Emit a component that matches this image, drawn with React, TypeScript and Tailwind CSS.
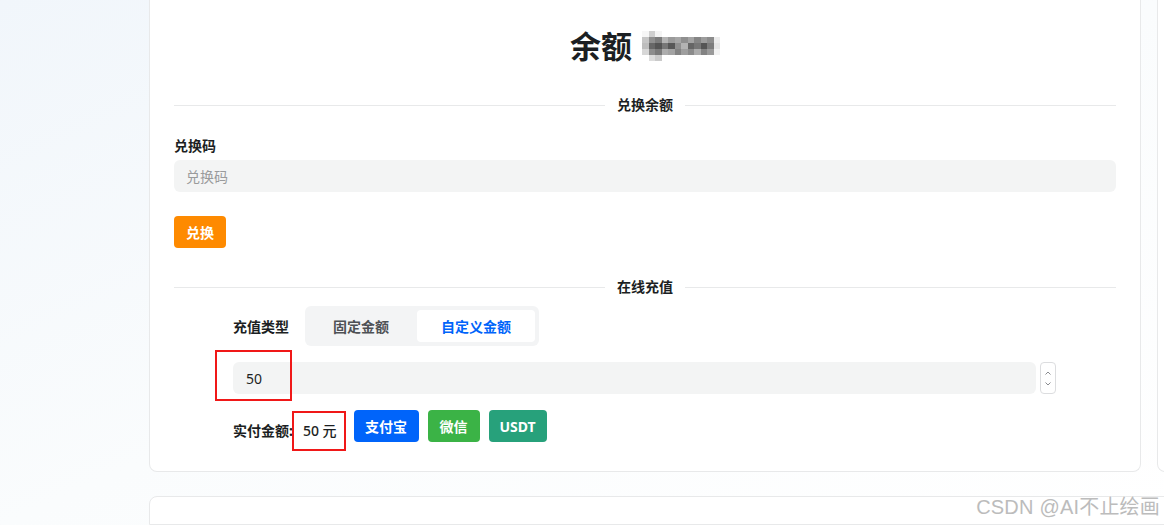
import React from "react";

const mosaic: string[][] = [
  ["#f6f6f6", "#cfcfcf", "#f4f4f4", "#ffffff", "#ffffff", "#ffffff", "#ffffff", "#ffffff", "#ffffff", "#ffffff", "#ffffff", "#ffffff"],
  ["#c6c6c6", "#8f8f8f", "#7c7c7c", "#b4b4b4", "#9a9a9a", "#a6a6a6", "#8f8f8f", "#a3a3a3", "#858585", "#9c9c9c", "#8c8c8c", "#ececec"],
  ["#bdbdbd", "#676767", "#555555", "#777777", "#575757", "#8f8f8f", "#b3b3b3", "#656565", "#767676", "#545454", "#7b7b7b", "#e4e4e4"],
  ["#d7d7d7", "#8d8d8d", "#7a7a7a", "#adadad", "#a3a3a3", "#838383", "#9e9e9e", "#8b8b8b", "#acacac", "#838383", "#9a9a9a", "#f2f2f2"],
  ["#ffffff", "#dcdcdc", "#cacaca", "#ffffff", "#ffffff", "#ffffff", "#ffffff", "#ffffff", "#ffffff", "#ffffff", "#ffffff", "#ffffff"],
];

function Mosaic() {
  const s = 6.5;
  return (
    <svg width={78} height={30} viewBox="0 0 78 32.5" preserveAspectRatio="none" className="block" shapeRendering="crispEdges">
      {mosaic.map((row, r) =>
        row.map((c, i) => <rect key={`${r}-${i}`} x={i * s} y={r * s} width={s + 0.2} height={s + 0.2} fill={c} />)
      )}
    </svg>
  );
}

function Divider({ label }: { label: string }) {
  return (
    <div className="flex items-center h-5">
      <div className="flex-1 h-px bg-[#e8e9ea]" />
      <span className="px-3 text-[14px] font-bold text-[#1c1f23] leading-5">{label}</span>
      <div className="flex-1 h-px bg-[#e8e9ea]" />
    </div>
  );
}

export default function App() {
  return (
    <div
      className="relative h-[525px] w-[1164px] overflow-hidden bg-gradient-to-br from-[#f1f6fb] via-[#fafcfd] to-white flex"
      style={{ fontFamily: '"Noto Sans", "Noto Sans CJK SC", sans-serif' }}
    >
      <div className="w-[149px] flex-none" />
      <div className="flex flex-col flex-none w-[1100px]">
        <div className="flex gap-[16px]">
          <div className="w-[992px] h-[472px] flex-none bg-white border border-t-0 border-[#e8e9ea] rounded-b-lg px-6">
            <div className="pt-[26px] flex items-center justify-center gap-[10px] h-[66px]">
              <span className="text-[31px] leading-[40px] font-bold text-[#1c1f23]">余额</span>
              <Mosaic />
            </div>
            <div className="mt-[29px]">
              <Divider label="兑换余额" />
            </div>
            <div className="mt-[21px] text-[14px] leading-5 font-bold text-[#1c1f23]">兑换码</div>
            <div className="mt-1 h-8 rounded-md bg-[#f3f4f4] flex items-center px-3 text-[14px] text-[#9a9b9c]">兑换码</div>
            <button className="mt-6 h-8 w-[52px] rounded bg-[#fe8a00] text-white text-[14px] font-bold flex items-center justify-center">
              兑换
            </button>
            <div className="mt-[29px]">
              <Divider label="在线充值" />
            </div>
            <div className="w-[824px] ml-[59px] relative">
              <div className="mt-[9px] flex items-center gap-4 h-10">
                <span className="text-[14px] font-bold text-[#1c1f23]">充值类型</span>
                <div className="flex gap-1 p-1 bg-[#f3f4f5] rounded-md">
                  <div className="h-8 px-6 flex items-center text-[14px] font-semibold text-[#4e5155]">固定金额</div>
                  <div className="h-8 px-6 flex items-center text-[14px] font-bold text-[#0064fa] bg-white rounded">自定义金额</div>
                </div>
              </div>
              <div className="mt-4 flex items-center gap-1">
                <div className="h-8 w-[803px] rounded-md bg-[#f3f4f4] flex items-center px-[13px] text-[14px] text-[#1c1f23]">50</div>
                <div className="h-8 w-4 border border-[#dcdddf] rounded flex flex-col items-center justify-center gap-[7px]">
                  <svg width="6" height="4" viewBox="0 0 6 4"><path d="M0.5 3.5 L3 1 L5.5 3.5" fill="none" stroke="#8a8c90" strokeWidth="1" /></svg>
                  <svg width="6" height="4" viewBox="0 0 6 4"><path d="M0.5 0.5 L3 3 L5.5 0.5" fill="none" stroke="#8a8c90" strokeWidth="1" /></svg>
                </div>
              </div>
              <div className="mt-4 flex items-end h-8">
                <span className="text-[14px] font-bold text-[#1c1f23] leading-5 pb-px">实付金额:</span>
                <span className="ml-[10px] text-[14px] font-medium text-[#1c1f23] leading-5 pb-px">50 元</span>
                <div className="ml-[17px] flex gap-[9px] self-start">
                  <button className="h-8 w-[65px] rounded bg-[#0064fa] text-white text-[14px] font-bold">支付宝</button>
                  <button className="h-8 w-[52px] rounded bg-[#3bb346] text-white text-[14px] font-bold">微信</button>
                  <button className="h-8 w-[58px] rounded bg-[#27a17b] text-white text-[14px] font-bold">USDT</button>
                </div>
              </div>
              <div className="absolute left-[-18px] top-[44px] w-[77px] h-[51px] border-2 border-[#f01818]" />
              <div className="absolute left-[59px] top-[105px] w-[54px] h-[40px] border-2 border-[#f01818]" />
            </div>
          </div>
          <div className="w-[400px] h-[472px] flex-none bg-white border border-t-0 border-[#e8e9ea] rounded-b-lg" />
        </div>
        <div className="mt-[24px] h-[100px] bg-white border border-[#e8e9ea] rounded-t-lg" />
      </div>
      <div
        className="absolute right-[4px] bottom-[8px] text-[20px] leading-none text-[#bcbcbc] tracking-[0.2px]"
        style={{ fontFamily: '"Liberation Sans", "Noto Sans CJK SC", sans-serif', textShadow: "0 0 1px #fff, 0 0 2px #fff" }}
      >
        CSDN @AI不止绘画
      </div>
    </div>
  );
}
